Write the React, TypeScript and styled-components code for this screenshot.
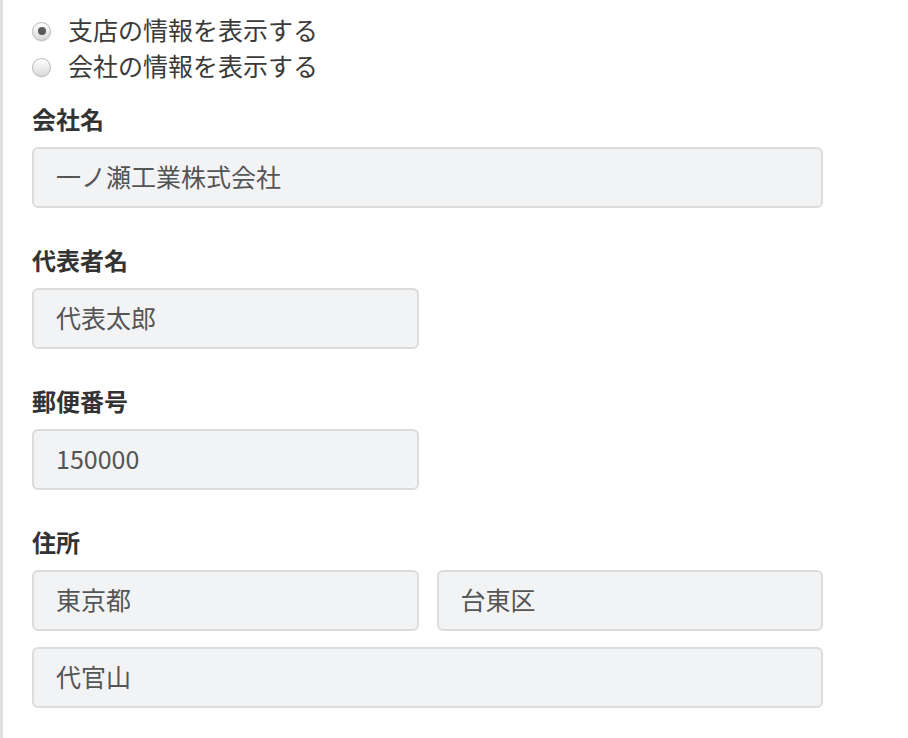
import React from 'react'
import styled, { createGlobalStyle } from 'styled-components'

const GlobalStyle = createGlobalStyle`
  body {
    margin: 0;
    background: #fff;
    font-family: "Noto Sans CJK JP", "Noto Sans", sans-serif;
    color: #333;
  }
`

const Page = styled.div`
  min-height: 100vh;
  border-left: 3px solid #dedede;
  padding: 13px 0 0 29px;
  box-sizing: border-box;
`

const Form = styled.div`
  width: 791px;
`

const RadioGroup = styled.div`
  display: flex;
  flex-direction: column;
  margin-bottom: 18px;
`

const RadioRow = styled.label`
  display: flex;
  align-items: center;
  height: 36px;
  font-size: 25px;
  color: #3a3a3a;
`

const RadioText = styled.span`
  line-height: 32px;
  padding-bottom: 4px;
`

const RadioDot = styled.span<{ checked?: boolean }>`
  width: 17px;
  height: 17px;
  margin: 0 17px 0 0;
  border-radius: 50%;
  border: 1px solid #b8b8b8;
  background: linear-gradient(#ffffff, #d9d9d9);
  display: flex;
  align-items: center;
  justify-content: center;
  box-shadow: 0 1px 1px rgba(0, 0, 0, 0.08);

  &::after {
    content: '';
    display: ${(p) => (p.checked ? 'block' : 'none')};
    width: 8px;
    height: 8px;
    border-radius: 50%;
    background: #5a5a5a;
  }
`

const Field = styled.div<{ last?: boolean }>`
  margin-bottom: ${(p) => (p.last ? '0' : '36px')};
`

const Label = styled.div`
  height: 36px;
  line-height: 32px;
  font-size: 24px;
  font-weight: 700;
  color: #333;
  margin-bottom: 8px;
`

const Row = styled.div`
  display: grid;
  grid-template-columns: 1fr 1fr;
  column-gap: 18px;
  margin-bottom: 16px;
`

const Input = styled.div<{ half?: boolean }>`
  width: ${(p) => (p.half ? '387px' : '100%')};
  height: 61px;
  box-sizing: border-box;
  border: 2px solid #dcdcdc;
  border-radius: 6px;
  background: #f2f3f5;
  padding: 0 22px 4px;
  display: flex;
  align-items: center;
  font-size: 25px;
  color: #555;
`

const RowInput = styled(Input)`
  width: 100%;
`

export default function App() {
  return (
    <>
      <GlobalStyle />
      <Page>
        <Form>
          <RadioGroup>
            <RadioRow>
              <RadioDot checked />
              <RadioText>支店の情報を表示する</RadioText>
            </RadioRow>
            <RadioRow>
              <RadioDot />
              <RadioText>会社の情報を表示する</RadioText>
            </RadioRow>
          </RadioGroup>
          <Field>
            <Label>会社名</Label>
            <Input>一ノ瀬工業株式会社</Input>
          </Field>
          <Field>
            <Label>代表者名</Label>
            <Input half>代表太郎</Input>
          </Field>
          <Field>
            <Label>郵便番号</Label>
            <Input half>150000</Input>
          </Field>
          <Field last>
            <Label>住所</Label>
            <Row>
              <RowInput>東京都</RowInput>
              <RowInput>台東区</RowInput>
            </Row>
            <Input>代官山</Input>
          </Field>
        </Form>
      </Page>
    </>
  )
}
